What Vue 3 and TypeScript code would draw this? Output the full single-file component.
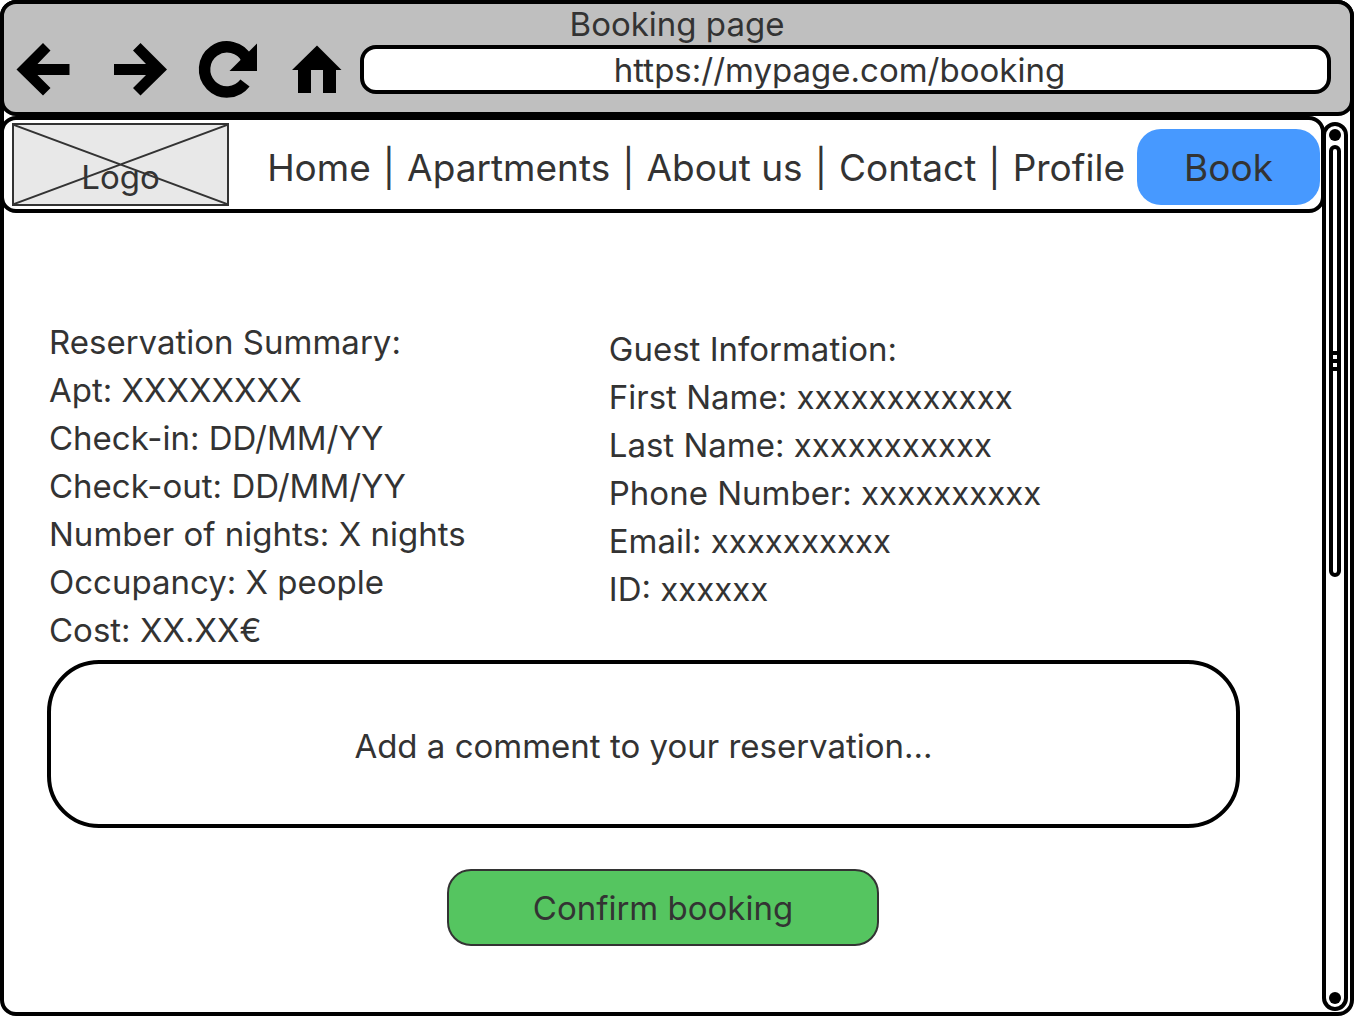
<script setup lang="ts">
import { ref } from 'vue'

const url = ref('https://mypage.com/booking')
const comment = ref('')

const links: string[] = ['Home', 'Apartments', 'About us', 'Contact', 'Profile']

const summary: string[] = [
  'Apt: XXXXXXXX',
  'Check-in: DD/MM/YY',
  'Check-out: DD/MM/YY',
  'Number of nights: X nights',
  'Occupancy: X people',
  'Cost: XX.XX€',
]

const guest: string[] = [
  'First Name: xxxxxxxxxxxx',
  'Last Name: xxxxxxxxxxx',
  'Phone Number: xxxxxxxxxx',
  'Email: xxxxxxxxxx',
  'ID: xxxxxx',
]
</script>

<template>
  <div class="window">
    <header class="chrome">
      <div class="title">Booking page</div>
      <div class="toolbar">
        <button type="button" class="tool" aria-label="Back">
          <svg viewBox="0 0 60 49"><path d="M.5 24.500 27-2l7.500 7.500L21.500 19h32v11h-32l13 13L27 50.500z" /></svg>
        </button>
        <button type="button" class="tool" aria-label="Forward">
          <svg viewBox="0 0 60 49"><path d="M61 24.500 34.500-2 27 5.500 40 19H8v11h32L27 43l7.500 7.500z" /></svg>
        </button>
        <button type="button" class="tool" aria-label="Reload">
          <svg viewBox="0 0 60 49">
            <path d="M49 38A22.500 22.500 0 1 1 51 14" fill="none" stroke="#000" stroke-width="11.500" />
            <path d="M61-1.500V26H33.500z" />
          </svg>
        </button>
        <button type="button" class="tool" aria-label="Home page">
          <svg viewBox="0 0 60 49"><path d="M31 .5 55.500 25H50v23H37V25H25v23H12V25H6z" /></svg>
        </button>
        <input v-model="url" class="address" type="text" aria-label="Address" />
      </div>
    </header>

    <div class="viewport">
      <div class="page">
        <nav class="navbar">
          <div class="logo">
            <svg class="cross" viewBox="0 0 100 100" preserveAspectRatio="none" aria-hidden="true">
              <path d="M0 0 100 100M100 0 0 100" />
            </svg>
            <span class="logo-text">Logo</span>
          </div>
          <div class="links">
            <template v-for="(link, i) in links" :key="link">
              <span v-if="i > 0">|</span><a href="#">{{ link }}</a>
            </template>
          </div>
          <button type="button" class="book">Book</button>
        </nav>

        <main class="content">
          <div class="details">
            <section class="summary">
              <h2>Reservation Summary:</h2>
              <p v-for="line in summary" :key="line">{{ line }}</p>
            </section>
            <section class="guest">
              <h2>Guest Information:</h2>
              <p v-for="line in guest" :key="line">{{ line }}</p>
            </section>
          </div>
          <textarea
            v-model="comment"
            class="comment"
            aria-label="Comment"
            placeholder="Add a comment to your reservation..."
          ></textarea>
          <button type="button" class="confirm">Confirm booking</button>
        </main>
      </div>

      <div class="scrollbar" aria-hidden="true">
        <span class="dot"></span>
        <div class="track">
          <div class="thumb"><i></i><i></i><i></i></div>
        </div>
        <span class="dot"></span>
      </div>
    </div>
  </div>
</template>

<style>
body {
  margin: 0;
  background: #fff;
}
</style>

<style scoped>
* {
  box-sizing: border-box;
}

.window {
  display: flex;
  flex-direction: column;
  min-height: 100vh;
  border: 4px solid #000;
  border-radius: 16px;
  background: #fff;
  color: #333;
  font-family: Inter, "Liberation Sans", sans-serif;
  font-size: 33px;
}

button,
input,
textarea {
  margin: 0;
  color: inherit;
  font: inherit;
}

.chrome {
  margin: -4px -4px 0;
  padding-bottom: 18px;
  border: 4px solid #000;
  border-radius: 16px;
  background: #bfbfbf;
}

.title {
  line-height: 41px;
  text-align: center;
}

.toolbar {
  display: flex;
  gap: 30px;
  height: 49px;
  padding: 0 19px 0 12px;
}

.tool {
  flex: none;
  width: 60px;
  height: 49px;
  padding: 0;
  border: 0;
  background: none;
}

.tool svg {
  display: block;
  width: 60px;
  height: 49px;
  overflow: visible;
}

.address {
  flex: 1;
  min-width: 0;
  margin-left: -16px;
  padding: 0 12px 0 0;
  border: 4px solid #000;
  border-radius: 16px;
  background: #fff;
  text-align: center;
}

.viewport {
  display: flex;
  flex: 1;
}

.page {
  flex: 1;
  min-width: 0;
}

.navbar {
  display: flex;
  align-items: center;
  height: 97px;
  margin: 0 -3px 0 -4px;
  padding: 0 1px 0 8px;
  border: 4px solid #000;
  border-radius: 16px;
  font-size: 37px;
}

.logo {
  position: relative;
  flex: none;
  width: 217px;
  height: 83px;
  padding-top: 26px;
  border: 2px solid #333;
  background: #e8e8e8;
  font-size: 33px;
  line-height: 53px;
  text-align: center;
}

.cross {
  position: absolute;
  inset: 0;
  width: 100%;
  height: 100%;
}

.cross path {
  stroke: #333;
  stroke-width: 2px;
  vector-effect: non-scaling-stroke;
}

.logo-text {
  position: relative;
}

.links {
  flex: 1;
  display: flex;
  justify-content: flex-end;
  gap: 12px;
  padding: 6px 12px 0 0;
  white-space: nowrap;
}

.links a {
  color: inherit;
  text-decoration: none;
}

.book {
  flex: none;
  width: 183px;
  height: 76px;
  margin-top: 4px;
  padding: 2px 0 0;
  border: 0;
  border-radius: 24px;
  background: #4799ff;
}

.content {
  display: flex;
  flex-direction: column;
  padding: 105px 82px 66px 43px;
}

.details {
  display: flex;
  padding-left: 2px;
  line-height: 48px;
}

.summary {
  flex: 0 0 47%;
}

.guest {
  padding-top: 7px;
}

h2,
p {
  margin: 0;
  font-size: 33px;
  font-weight: 400;
}

.comment {
  display: block;
  width: 100%;
  height: 168px;
  margin-top: 6px;
  padding: 58px 40px 0;
  border: 4px solid #000;
  border-radius: 52px;
  background: #fff;
  line-height: 48px;
  text-align: center;
  resize: none;
  overflow: hidden;
}

.comment::placeholder {
  color: #333;
  opacity: 1;
}

.confirm {
  align-self: center;
  width: 432px;
  height: 77px;
  margin: 41px 0 0 39px;
  padding: 0;
  border: 2px solid #333;
  border-radius: 24px;
  background: #55c560;
}

.scrollbar {
  display: flex;
  flex-direction: column;
  align-items: center;
  flex: none;
  width: 26px;
  margin: 6px 2px 1px 0;
  padding: 3px 0;
  border: 4px solid #000;
  border-radius: 13px;
}

.dot {
  flex: none;
  width: 12px;
  height: 12px;
  border-radius: 50%;
  background: #000;
}

.track {
  flex: 1;
  padding-top: 4px;
}

.thumb {
  display: flex;
  flex-direction: column;
  justify-content: center;
  gap: 4px;
  width: 12px;
  height: 51%;
  border: 4px solid #000;
  border-radius: 6px;
}

.thumb i {
  height: 4px;
  background: #000;
}
</style>
